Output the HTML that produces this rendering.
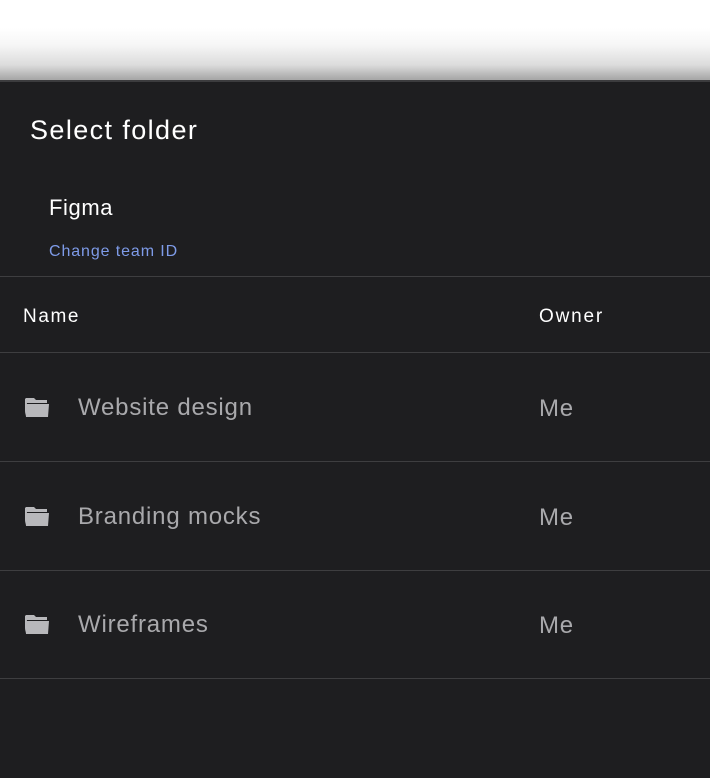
<!DOCTYPE html>
<html><head><style>
body{margin:0;width:710px;height:778px;overflow:hidden;background:#fff;font-family:"Liberation Sans",sans-serif;position:relative}
.sh{position:absolute;left:0;top:0;width:710px;height:80px;background:linear-gradient(#fff 0,#fff 28px,#f6f6f6 45px,#dcdcdc 65px,#a8a8a8 79px)}
.p{position:absolute;left:0;top:80px;width:710px;height:698px;background:#1e1e20;border-top:2px solid #3c3c3e;box-sizing:border-box}
.t{position:absolute;color:#fff;white-space:nowrap}
.l{position:absolute;left:0;width:710px;height:1px;background:#3e3e40}
.r{color:#a9a9ac;font-size:24px;letter-spacing:0.8px}
svg{position:absolute}
</style></head><body>
<div class="sh"></div>
<div class="p"></div>
<div class="t" style="left:30px;top:115px;font-size:27px;letter-spacing:1.4px">Select folder</div>
<div class="t" style="left:49px;top:195px;font-size:22px;letter-spacing:0.6px">Figma</div>
<div class="t" style="left:49px;top:243px;font-size:16px;letter-spacing:0.9px;color:#7e9be8">Change team ID</div>
<div class="l" style="top:276px"></div>
<div class="t" style="left:23px;top:306px;font-size:19px;letter-spacing:1.6px">Name</div>
<div class="t" style="left:539px;top:306px;font-size:19px;letter-spacing:1.8px">Owner</div>
<div class="l" style="top:352px"></div>
<div class="t r" style="left:78px;top:394px">Website design</div>
<div class="t r" style="left:539px;top:395px">Me</div>
<div class="l" style="top:461px"></div>
<div class="t r" style="left:78px;top:503px">Branding mocks</div>
<div class="t r" style="left:539px;top:504px">Me</div>
<div class="l" style="top:570px"></div>
<div class="t r" style="left:78px;top:611px">Wireframes</div>
<div class="t r" style="left:539px;top:612px">Me</div>
<div class="l" style="top:678px"></div>
<svg style="left:24px;top:396px" width="26" height="23" viewBox="0 0 26 23"><path d="M2 2h8l2 2h11v3H3L1 20V3z" fill="#b8b8bb"/><path d="M1 8h24l-1 13H2z" fill="#b8b8bb"/></svg>
<svg style="left:24px;top:505px" width="26" height="23" viewBox="0 0 26 23"><path d="M2 2h8l2 2h11v3H3L1 20V3z" fill="#b8b8bb"/><path d="M1 8h24l-1 13H2z" fill="#b8b8bb"/></svg>
<svg style="left:24px;top:613px" width="26" height="23" viewBox="0 0 26 23"><path d="M2 2h8l2 2h11v3H3L1 20V3z" fill="#b8b8bb"/><path d="M1 8h24l-1 13H2z" fill="#b8b8bb"/></svg>
</body></html>
